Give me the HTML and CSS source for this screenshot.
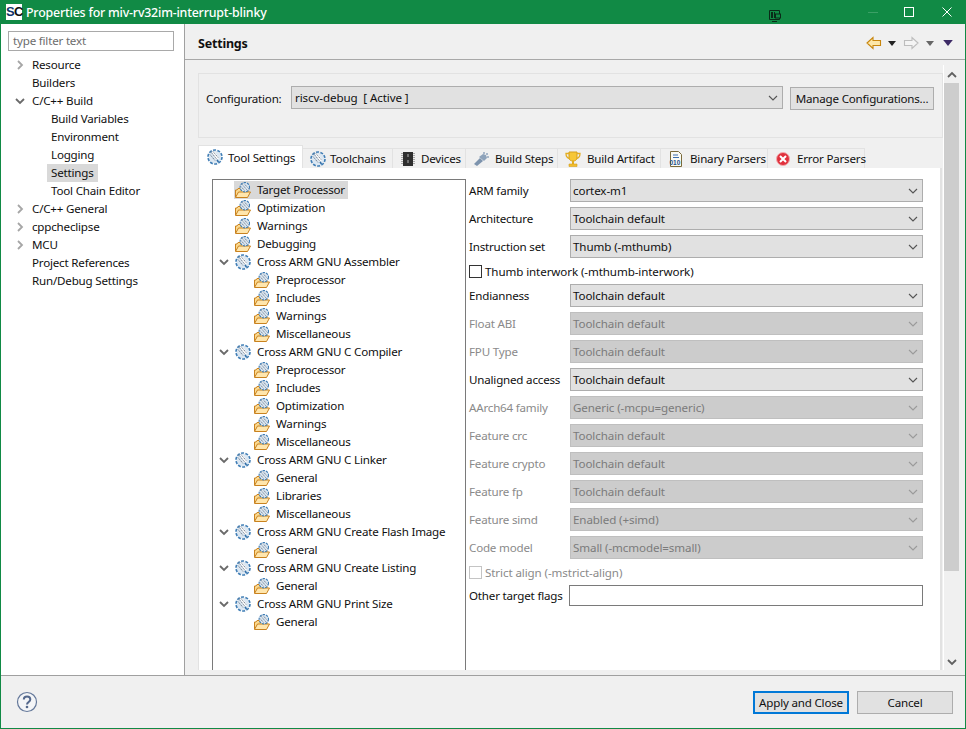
FILE: index.html
```html
<!DOCTYPE html>
<html lang="en">
<head>
<meta charset="utf-8">
<title>Properties for miv-rv32im-interrupt-blinky</title>
<link rel="stylesheet" href="styles.css">
</head>
<body>
<svg class="defs" width="0" height="0" aria-hidden="true">
  <symbol id="gear" viewBox="0 0 16 16">
    <circle cx="8" cy="8" r="6.600" fill="#dbe7f2"/>
    <circle cx="8" cy="8" r="7" fill="none" stroke="#3f7db5" stroke-width="1.600" stroke-dasharray="3 1.400"/>
    <path d="M5 3h3l4 6-2.500 2z" fill="#fff"/>
    <path d="M3.500 2.500l7 8.500M6 2.500l5.500 6.500M3 5.500l5 6" stroke="#6b7686" stroke-width=".9" stroke-dasharray="1.500 .7" fill="none"/>
    <path d="M10 11l1.500 2" stroke="#2f6ea8" stroke-width="1.500"/>
  </symbol>
  <symbol id="fgear" viewBox="0 0 16 16">
    <path d="M.5 15V8h1.500l1-1.500h3v2h7v2" fill="#fbd98f" stroke="#c9821f"/>
    <path d="M.5 15.500l3-5.500h12l-3 5.500z" fill="#ffe6ad" stroke="#c9821f"/>
    <circle cx="9.800" cy="5.200" r="4.700" fill="#dbe7f2"/>
    <circle cx="9.800" cy="5.200" r="4.700" fill="none" stroke="#3f7db5" stroke-width="1.100" stroke-dasharray="2.400 1"/>
    <path d="M7 2.200l5 5.800M9 1.500l4.500 5M6 4.500l4 4.500" stroke="#6b7686" stroke-width=".9" stroke-dasharray="1.300 .7"/>
  </symbol>
  <symbol id="chev" viewBox="0 0 10 10">
    <path d="M1 3l4 4 4-4" fill="none" stroke="#6a6a6a" stroke-width="1.800"/>
  </symbol>
  <symbol id="chevr" viewBox="0 0 10 10">
    <path d="M3 1l4 4-4 4" fill="none" stroke="#a6a6a6" stroke-width="1.800"/>
  </symbol>
  <symbol id="selchev" viewBox="0 0 10 6">
    <path d="M1 1l4 4 4-4" fill="none" stroke="currentColor" stroke-width="1.100"/>
  </symbol>
  <symbol id="tri" viewBox="0 0 8 5">
    <path d="M0 0h8L4 5z" fill="currentColor"/>
  </symbol>
</svg>

<div class="window">
  <header class="titlebar">
    <span class="logo"><span class="logo-s">S</span>C</span>
    <span class="title">Properties for miv-rv32im-interrupt-blinky</span>
    <svg class="tb-pin" width="12" height="12" viewBox="0 0 12 12"><path d="M.5.500h10v9h-10zM3 11.500h5" fill="none" stroke="#0a2a18"/><path d="M2 2h2v6H2zM5 2h1v6H5z" fill="#0a2a18"/><rect x="6.500" y="4" width="5" height="4" fill="#118a45" stroke="#0a2a18"/></svg>
    <span class="tb-min"></span>
    <span class="tb-max"></span>
    <svg class="tb-close" width="10" height="10" viewBox="0 0 10 10"><path d="M.5.500l9 9M9.500.500l-9 9" stroke="#fff" fill="none"/></svg>
  </header>

  <div class="body">
    <aside class="sidebar">
      <div class="filter">type filter text</div>
      <ul class="nav">
        <li class="nav-row"><svg class="nav-tw"><use href="#chevr"/></svg><span>Resource</span></li>
        <li class="nav-row"><span class="nav-tw"></span><span>Builders</span></li>
        <li class="nav-row"><svg class="nav-tw"><use href="#chev"/></svg><span>C/C++ Build</span></li>
        <li class="nav-row nav-sub"><span>Build Variables</span></li>
        <li class="nav-row nav-sub"><span>Environment</span></li>
        <li class="nav-row nav-sub"><span>Logging</span></li>
        <li class="nav-row nav-sub"><span class="nav-sel">Settings</span></li>
        <li class="nav-row nav-sub"><span>Tool Chain Editor</span></li>
        <li class="nav-row"><svg class="nav-tw"><use href="#chevr"/></svg><span>C/C++ General</span></li>
        <li class="nav-row"><svg class="nav-tw"><use href="#chevr"/></svg><span>cppcheclipse</span></li>
        <li class="nav-row"><svg class="nav-tw"><use href="#chevr"/></svg><span>MCU</span></li>
        <li class="nav-row"><span class="nav-tw"></span><span>Project References</span></li>
        <li class="nav-row"><span class="nav-tw"></span><span>Run/Debug Settings</span></li>
      </ul>
    </aside>

    <main class="main">
      <div class="head">
        <h1 class="head-title">Settings</h1>
        <div class="head-tools">
          <svg class="arrow" width="16" height="14" viewBox="0 0 16 14"><path d="M1 7l6-5.500V4.500h7.500v5H7v3z" fill="#fde7a8" stroke="#c8860d" stroke-width="1.100"/></svg>
          <svg class="tri tri-dark"><use href="#tri"/></svg>
          <svg class="arrow arrow-fwd" width="16" height="14" viewBox="0 0 16 14"><path d="M15 7L9 1.500V4.500H1.500v5H9v3z" fill="#f4f4f4" stroke="#bdbdbd" stroke-width="1.100"/></svg>
          <svg class="tri tri-grey"><use href="#tri"/></svg>
          <svg class="tri tri-menu"><use href="#tri"/></svg>
        </div>
      </div>

      <div class="pane">
        <div class="scroll-content">
          <section class="config">
            <span class="config-label">Configuration:</span>
            <div class="select select-config"><span>riscv-debug&nbsp; [ Active ]</span><svg class="sc"><use href="#selchev"/></svg></div>
            <button class="btn btn-manage">Manage Configurations...</button>
          </section>

          <div class="tabs">
            <div class="tab tab-active t1"><svg class="ti"><use href="#gear"/></svg>Tool Settings</div>
            <div class="tab t2"><svg class="ti"><use href="#gear"/></svg>Toolchains</div>
            <div class="tab t3"><svg class="ti" viewBox="0 0 16 16"><path d="M1 2.500h14M1 4.500h14M1 6.500h14M1 8.500h14M1 10.500h14M1 12.500h14" stroke="#a8a8a8"/><rect x="3" y="1" width="10" height="14" fill="#2e2e2e"/><rect x="7" y="3" width="2" height="3" fill="#6f6f6f"/><rect x="7" y="9" width="2" height="3" fill="#6f6f6f"/></svg>Devices</div>
            <div class="tab t4"><svg class="ti" viewBox="0 0 16 16"><path d="M1 13l3 2 6-5-3-3z" fill="#7d93ad"/><path d="M6 6l4-3 3 1 1 3-3 3z" fill="#8da2ba"/><path d="M10 1h2v2h-2zM13 2h2v2h-2zM14 5h2v2h-2z" fill="#a9b8ca"/></svg>Build Steps</div>
            <div class="tab t5"><svg class="ti" viewBox="0 0 16 16"><path d="M4 1h8v6c0 2-2 3-4 3s-4-1-4-3z" fill="#f7c736" stroke="#d59f1c"/><path d="M4 2.500H1c0 3 1 4.500 3.500 5M12 2.500h3c0 3-1 4.500-3.500 5" fill="none" stroke="#e3ad22" stroke-width="1.300"/><path d="M7 10h2v3H7z" fill="#e3ad22"/><path d="M4 13h8v2.500H4z" fill="#f2be2e" stroke="#d59f1c" stroke-width=".6"/></svg>Build Artifact</div>
            <div class="tab t6"><svg class="ti" viewBox="0 0 16 16"><path d="M2.500.500h8l3 3v12h-11z" fill="#fbfbf4" stroke="#7a6a3a"/><path d="M5 4h5M5 6.500h6" stroke="#3d6fae"/><text x="1.500" y="14" class="bin">010</text></svg>Binary Parsers</div>
            <div class="tab t7"><svg class="ti" viewBox="0 0 16 16"><circle cx="8" cy="8" r="6.500" fill="#e0303c" stroke="#f3a9ac"/><path d="M5 5l6 6M11 5l-6 6" stroke="#fff" stroke-width="2"/></svg>Error Parsers</div>
          </div>

          <div class="tab-body">
            <ul class="tree">
              <li class="row l1 row-sel"><svg class="fi"><use href="#fgear"/></svg><span>Target Processor</span></li>
              <li class="row l1"><svg class="fi"><use href="#fgear"/></svg><span>Optimization</span></li>
              <li class="row l1"><svg class="fi"><use href="#fgear"/></svg><span>Warnings</span></li>
              <li class="row l1"><svg class="fi"><use href="#fgear"/></svg><span>Debugging</span></li>
              <li class="row l1"><svg class="tw"><use href="#chev"/></svg><svg class="fi"><use href="#gear"/></svg><span>Cross ARM GNU Assembler</span></li>
              <li class="row l2"><svg class="fi"><use href="#fgear"/></svg><span>Preprocessor</span></li>
              <li class="row l2"><svg class="fi"><use href="#fgear"/></svg><span>Includes</span></li>
              <li class="row l2"><svg class="fi"><use href="#fgear"/></svg><span>Warnings</span></li>
              <li class="row l2"><svg class="fi"><use href="#fgear"/></svg><span>Miscellaneous</span></li>
              <li class="row l1"><svg class="tw"><use href="#chev"/></svg><svg class="fi"><use href="#gear"/></svg><span>Cross ARM GNU C Compiler</span></li>
              <li class="row l2"><svg class="fi"><use href="#fgear"/></svg><span>Preprocessor</span></li>
              <li class="row l2"><svg class="fi"><use href="#fgear"/></svg><span>Includes</span></li>
              <li class="row l2"><svg class="fi"><use href="#fgear"/></svg><span>Optimization</span></li>
              <li class="row l2"><svg class="fi"><use href="#fgear"/></svg><span>Warnings</span></li>
              <li class="row l2"><svg class="fi"><use href="#fgear"/></svg><span>Miscellaneous</span></li>
              <li class="row l1"><svg class="tw"><use href="#chev"/></svg><svg class="fi"><use href="#gear"/></svg><span>Cross ARM GNU C Linker</span></li>
              <li class="row l2"><svg class="fi"><use href="#fgear"/></svg><span>General</span></li>
              <li class="row l2"><svg class="fi"><use href="#fgear"/></svg><span>Libraries</span></li>
              <li class="row l2"><svg class="fi"><use href="#fgear"/></svg><span>Miscellaneous</span></li>
              <li class="row l1"><svg class="tw"><use href="#chev"/></svg><svg class="fi"><use href="#gear"/></svg><span>Cross ARM GNU Create Flash Image</span></li>
              <li class="row l2"><svg class="fi"><use href="#fgear"/></svg><span>General</span></li>
              <li class="row l1"><svg class="tw"><use href="#chev"/></svg><svg class="fi"><use href="#gear"/></svg><span>Cross ARM GNU Create Listing</span></li>
              <li class="row l2"><svg class="fi"><use href="#fgear"/></svg><span>General</span></li>
              <li class="row l1"><svg class="tw"><use href="#chev"/></svg><svg class="fi"><use href="#gear"/></svg><span>Cross ARM GNU Print Size</span></li>
              <li class="row l2"><svg class="fi"><use href="#fgear"/></svg><span>General</span></li>
            </ul>

            <div class="form">
              <div class="frow"><label>ARM family</label><div class="select"><span>cortex-m1</span><svg class="sc"><use href="#selchev"/></svg></div></div>
              <div class="frow"><label>Architecture</label><div class="select"><span>Toolchain default</span><svg class="sc"><use href="#selchev"/></svg></div></div>
              <div class="frow"><label>Instruction set</label><div class="select"><span>Thumb (-mthumb)</span><svg class="sc"><use href="#selchev"/></svg></div></div>
              <div class="check"><span class="box"></span>Thumb interwork (-mthumb-interwork)</div>
              <div class="frow"><label>Endianness</label><div class="select"><span>Toolchain default</span><svg class="sc"><use href="#selchev"/></svg></div></div>
              <div class="frow off"><label>Float ABI</label><div class="select"><span>Toolchain default</span><svg class="sc"><use href="#selchev"/></svg></div></div>
              <div class="frow off"><label>FPU Type</label><div class="select"><span>Toolchain default</span><svg class="sc"><use href="#selchev"/></svg></div></div>
              <div class="frow"><label>Unaligned access</label><div class="select"><span>Toolchain default</span><svg class="sc"><use href="#selchev"/></svg></div></div>
              <div class="frow off"><label>AArch64 family</label><div class="select"><span>Generic (-mcpu=generic)</span><svg class="sc"><use href="#selchev"/></svg></div></div>
              <div class="frow off"><label>Feature crc</label><div class="select"><span>Toolchain default</span><svg class="sc"><use href="#selchev"/></svg></div></div>
              <div class="frow off"><label>Feature crypto</label><div class="select"><span>Toolchain default</span><svg class="sc"><use href="#selchev"/></svg></div></div>
              <div class="frow off"><label>Feature fp</label><div class="select"><span>Toolchain default</span><svg class="sc"><use href="#selchev"/></svg></div></div>
              <div class="frow off"><label>Feature simd</label><div class="select"><span>Enabled (+simd)</span><svg class="sc"><use href="#selchev"/></svg></div></div>
              <div class="frow off"><label>Code model</label><div class="select"><span>Small (-mcmodel=small)</span><svg class="sc"><use href="#selchev"/></svg></div></div>
              <div class="check off"><span class="box"></span>Strict align (-mstrict-align)</div>
              <div class="frow frow-input"><label>Other target flags</label><div class="input"></div></div>
            </div>
          </div>
        </div>

        <div class="scrollbar">
          <svg class="sb-arrow sb-up" viewBox="0 0 10 10"><path d="M1 7l4-4 4 4" fill="none" stroke="#606060" stroke-width="1.800"/></svg>
          <div class="sb-track"><div class="sb-thumb"></div></div>
          <svg class="sb-arrow" viewBox="0 0 10 10"><path d="M1 3l4 4 4-4" fill="none" stroke="#606060" stroke-width="1.800"/></svg>
        </div>
      </div>
    </main>
  </div>

  <footer class="footer">
    <svg class="help" width="22" height="22" viewBox="0 0 22 22"><circle cx="11" cy="11" r="9.500" fill="#f4f5f7" stroke="#64789a" stroke-width="1.200"/><path d="M7.800 8.500c0-4 6.500-4 6.500 0 0 2.500-3.300 2.500-3.300 5" fill="none" stroke="#54688c" stroke-width="2"/><circle cx="11" cy="16" r="1.300" fill="#54688c"/></svg>
    <div class="actions">
      <button class="btn btn-foot btn-default">Apply and Close</button>
      <button class="btn btn-foot">Cancel</button>
    </div>
  </footer>
</div>
</body>
</html>
```

FILE: styles.css
```css
* { box-sizing: border-box; }
html, body { margin: 0; padding: 0; }
body {
  width: 966px;
  height: 729px;
  overflow: hidden;
  font-family: "Noto Sans", "Open Sans", sans-serif;
  font-size: 11.600px;
  letter-spacing: -.2px;
  color: #101010;
  background: #f0f0f0;
}
.defs { position: absolute; }
ul { list-style: none; margin: 0; padding: 0; }

.window {
  width: 966px;
  height: 729px;
  display: flex;
  flex-direction: column;
  border: 1px solid #118a45;
  border-top: 0;
}

/* title bar */
.titlebar {
  height: 24px;
  margin: 0 -1px;
  background: #118a45;
  color: #fff;
  display: flex;
  align-items: center;
  padding: 0 14px 0 6px;
  flex: none;
}
.logo {
  width: 16px;
  height: 16px;
  background: #fff;
  color: #111;
  font-family: "Liberation Sans", sans-serif;
  font-weight: 700;
  font-size: 13px;
  line-height: 16px;
  text-align: center;
  letter-spacing: -.6px;
  flex: none;
}
.logo-s { color: #12356b; }
.title {
  margin-left: 4px;
  font-size: 12.400px;
  font-weight: 500;
  width: 743px;
  flex: none;
  white-space: nowrap;
}
.tb-pin { margin: 7px 87px 0 0; flex: none; }
.tb-min { width: 10px; height: 1px; background: #3ba066; margin-right: 26px; flex: none; }
.tb-max { width: 10px; height: 10px; border: 1px solid #fff; margin-right: 28px; flex: none; }
.tb-close { flex: none; }

/* body */
.body { flex: 1; display: flex; min-height: 0; }
.sidebar {
  width: 184px;
  background: #fff;
  border-right: 1px solid #a0a0a0;
  flex: none;
  padding: 7px 10px 0 7px;
}
.filter {
  width: 166px;
  height: 20px;
  border: 1px solid #a9a9a9;
  color: #6d6d6d;
  line-height: 18px;
  padding-left: 4px;
}
.nav { margin-top: 5px; }
.nav-row { height: 18px; display: flex; align-items: center; line-height: 18px; }
.nav-tw { width: 10px; height: 10px; margin: 0 7px 0 7px; flex: none; }
.nav-sub { padding-left: 43px; }
.nav-sel { background: #d9d9d9; padding: 0 4px; margin-left: -4px; }

.main { flex: 1; min-width: 0; display: flex; flex-direction: column; }
.head {
  height: 36px;
  border-bottom: 1px solid #a8a8a8;
  display: flex;
  align-items: center;
  justify-content: space-between;
  padding: 3px 12px 0 13px;
  flex: none;
}
.head-title { margin: 0; font-size: 12.500px; font-weight: 700; }
.head-tools { display: flex; align-items: center; }
.arrow { flex: none; }
.tri { width: 8px; height: 5px; margin: 0 7px; flex: none; }
.tri-dark { color: #222; margin-left: 6px; }
.tri-grey { color: #666; }
.tri-menu { color: #3d2a66; width: 10px; height: 6px; margin: 0 0 0 2px; }

.pane { flex: 1; min-height: 0; display: flex; padding: 5px 5px 5px 13px; }
.scroll-content { width: 745px; flex: none; display: flex; flex-direction: column; min-height: 0; overflow: hidden; padding-top: 8px; }

.config {
  height: 65px;
  flex: none;
  border: 1px solid #e2e2e2;
  display: flex;
  align-items: flex-start;
  padding: 12px 8px 0 7px;
}
.config-label { width: 85px; line-height: 25px; flex: none; white-space: nowrap; }
.select {
  flex: 1;
  height: 23px;
  background: #e1e1e1;
  border: 1px solid #adadad;
  display: flex;
  align-items: center;
  justify-content: space-between;
  padding: 0 3px 0 2px;
  color: #101010;
  letter-spacing: -.1px;
}
.select-config { padding-left: 3px; }
.sc { width: 10px; height: 6px; color: #555; margin-right: 1px; flex: none; }
.btn {
  font: inherit;
  letter-spacing: inherit;
  color: #101010;
  background: #e1e1e1;
  border: 1px solid #adadad;
  padding: 0;
  border-radius: 0;
  white-space: nowrap;
}
.btn-manage { width: 144px; height: 23px; margin: 1px 0 0 7px; flex: none; }

.tabs { height: 23px; margin-top: 7px; flex: none; display: flex; align-items: flex-end; position: relative; z-index: 1; }
.tab {
  height: 20px;
  background: #f0f0f0;
  border: 1px solid #e2e2e2;
  border-bottom: 0;
  border-left: 0;
  display: flex;
  align-items: center;
  padding-left: 7px;
  white-space: nowrap;
  flex: none;
}
.tab-active { height: 23px; background: #fff; border-left: 1px solid #e2e2e2; padding-left: 8px; }
.ti { width: 16px; height: 16px; margin-right: 6px; flex: none; }
.t1 .ti { margin-right: 5px; }
.t1 { width: 105px; }
.t2 { width: 90px; }
.t2 .ti { margin-right: 4px; }
.t3 { width: 73px; }
.t3 .ti { margin-right: 5px; }
.t4 { width: 92px; }
.t5 { width: 103px; }
.t6 { width: 107px; }
.t7 { width: 97px; }
.bin { font-family: "Liberation Sans", sans-serif; font-size: 6.500px; font-weight: 700; fill: #24508c; letter-spacing: 0; }

.tab-body {
  flex: 1;
  min-height: 0;
  background: #fff;
  border-left: 1px solid #e2e2e2;
  border-right: 2px solid #e2e2e2;
  margin-right: 1px;
  display: flex;
  padding: 11px 17px 0 13px;
  overflow: hidden;
}
.tree {
  width: 254px;
  height: 600px;
  flex: none;
  border: 1px solid #7a7a7a;
  padding-top: 1px;
}
.row { height: 18px; display: flex; align-items: center; position: relative; line-height: 18px; }
.l1 { padding-left: 22px; }
.l2 { padding-left: 41px; }
.fi { width: 16px; height: 16px; margin-right: 6px; flex: none; }
.tw { position: absolute; left: 6px; top: 4px; width: 10px; height: 10px; }
.row-sel span { background: #d9d9d9; padding-right: 3px; }
.row-sel .fi { background: #d9d9d9; margin: 0 0 0 -1px; width: 23px; height: 18px; padding: 1px 6px 1px 1px; }

.form { flex: 1; min-width: 0; margin-left: 3px; display: flex; flex-direction: column; gap: 5px; }
.frow { height: 23px; display: flex; align-items: center; flex: none; }
.frow label { width: 101px; flex: none; white-space: nowrap; }
.frow.off label, .check.off { color: #8a8a8a; }
.frow.off .select { background: #ccc; border-color: #bfbfbf; color: #7b7b7b; }
.frow.off .sc { color: #9a9a9a; }
.check { height: 16px; display: flex; align-items: center; flex: none; white-space: nowrap; letter-spacing: -.1px; }
.box { width: 13px; height: 13px; border: 1px solid #333; background: #fff; margin-right: 3px; flex: none; }
.check.off .box { border-color: #c4c4c4; }
.frow-input { height: 21px; }
.frow-input label { width: 100px; }
.input { flex: 1; height: 21px; background: #fff; border: 1px solid #7a7a7a; }

.scrollbar { width: 16px; border-left: 1px solid #fff; flex: none; display: flex; flex-direction: column; align-items: center; background: #f0f0f0; }
.sb-arrow { width: 10px; height: 10px; margin: 5px 0 3px; flex: none; }
.sb-track { flex: 1; width: 100%; min-height: 0; }
.sb-thumb { height: 488px; background: #cdcdcd; }

.footer {
  height: 53px;
  flex: none;
  border-top: 1px solid #a0a0a0;
  display: flex;
  align-items: center;
  justify-content: space-between;
  padding: 0 12px 0 15px;
}
.help { flex: none; }
.actions { display: flex; gap: 8px; }
.btn-foot { width: 96px; height: 23px; }
.btn-default { border: 2px solid #0078d7; }
```
